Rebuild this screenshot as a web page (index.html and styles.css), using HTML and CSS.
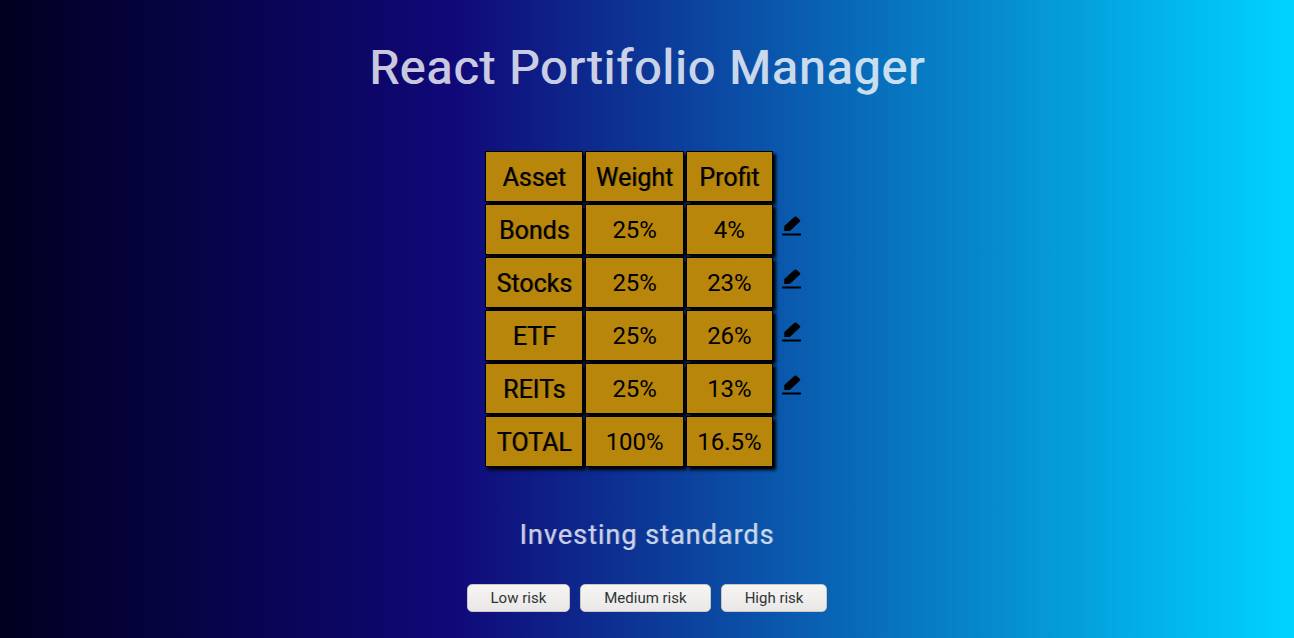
FILE: index.html
```html
<!DOCTYPE html>
<html lang="en">
<head>
<meta charset="utf-8">
<title>React Portifolio Manager</title>
<link rel="stylesheet" href="styles.css">
</head>
<body>
<svg class="sprite" aria-hidden="true"><symbol id="pencil" viewBox="0 0 24 24"><path d="M2 19.500h19v2h-19zM4.300 17v-5L14.500 2.800q1-.8 2 0l3.500 3.200q.8.800 0 1.600L9.800 17z"/></symbol></svg>
<main class="app">
  <h1 class="title">React Portifolio Manager</h1>
  <table class="portfolio">
    <thead>
      <tr><th scope="col">Asset</th><th scope="col">Weight</th><th scope="col">Profit</th></tr>
    </thead>
    <tbody>
      <tr><th scope="row">Bonds</th><td>25%</td><td>4%</td><td class="tool"><button class="edit" type="button" aria-label="Edit Bonds"><svg><use href="#pencil"/></svg></button></td></tr>
      <tr><th scope="row">Stocks</th><td>25%</td><td>23%</td><td class="tool"><button class="edit" type="button" aria-label="Edit Stocks"><svg><use href="#pencil"/></svg></button></td></tr>
      <tr><th scope="row">ETF</th><td>25%</td><td>26%</td><td class="tool"><button class="edit" type="button" aria-label="Edit ETF"><svg><use href="#pencil"/></svg></button></td></tr>
      <tr><th scope="row">REITs</th><td>25%</td><td>13%</td><td class="tool"><button class="edit" type="button" aria-label="Edit REITs"><svg><use href="#pencil"/></svg></button></td></tr>
      <tr><th scope="row">TOTAL</th><td>100%</td><td>16.5%</td></tr>
    </tbody>
  </table>
  <h2 class="subtitle">Investing standards</h2>
  <div class="actions">
    <button class="risk" type="button">Low risk</button>
    <button class="risk" type="button">Medium risk</button>
    <button class="risk" type="button">High risk</button>
  </div>
</main>
</body>
</html>
```
FILE: styles.css
```css
* { box-sizing: border-box; }
body {
  margin: 0;
  min-height: 100vh;
  font-family: Roboto, sans-serif;
  background: linear-gradient(90deg, #000020 0%, #100878 35%, #00d4ff 100%);
}
.sprite { display: none; }
.app {
  display: flex;
  flex-direction: column;
  align-items: center;
  padding: 40px 0 26px;
}
.title, .subtitle {
  margin: 0;
  font-weight: 400;
  letter-spacing: 1px;
  color: #fff;
  text-shadow: 1px 0 #fff;
  opacity: 0.78;
}
.title {
  font-size: 48px;
  line-height: 56px;
}
.portfolio {
  margin-top: 53px;
  border-collapse: separate;
  border-spacing: 2px;
  font-size: 24px;
  line-height: 29px;
  text-align: center;
  color: #000;
}
.portfolio th, .portfolio td {
  padding: 11px 10px 9px;
  border: 1px solid #000;
  background: #b8860b;
  box-shadow: 3px 3px 3px #000;
  font-weight: 400;
}
.portfolio th {
  font-size: 25px;
  text-shadow: 1px 0 rgba(0, 0, 0, 0.4);
}
.portfolio .tool {
  padding: 0 5px;
  border: 0;
  background: none;
  box-shadow: none;
  vertical-align: middle;
}
.edit {
  display: block;
  padding: 0 0 8px;
  border: 0;
  background: none;
}
.edit svg {
  display: block;
  width: 24px;
  height: 24px;
}
.subtitle {
  margin-top: 48px;
  font-size: 27px;
  line-height: 36px;
  text-shadow: 1px 0 rgba(255, 255, 255, 0.4);
}
.actions {
  display: flex;
  gap: 10px;
  margin-top: 31px;
}
.risk {
  height: 28px;
  padding: 0 23px;
  border: 1px solid #cdc7c2;
  border-radius: 5px;
  background: linear-gradient(#f6f5f4, #e9e8e6);
  font: 15px/20px Roboto, sans-serif;
  color: #2e3436;
}
```
